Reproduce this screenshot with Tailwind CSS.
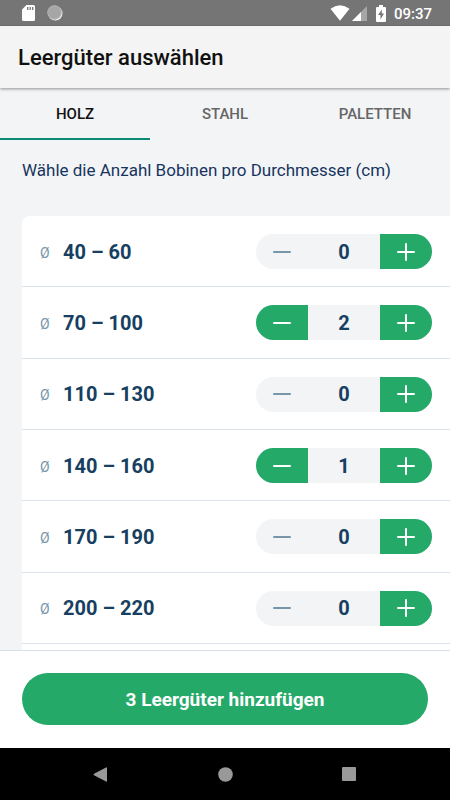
<!DOCTYPE html>
<html lang="de">
<head>
<meta charset="utf-8">
<meta name="viewport" content="width=device-width, initial-scale=1">
<title>Leergüter auswählen</title>
<script src="https://cdn.jsdelivr.net/npm/@tailwindcss/browser@4"></script>
</head>
<body class="flex h-screen flex-col overflow-hidden bg-[#f3f4f6] font-[Roboto,sans-serif]">
  <div class="flex h-[26px] shrink-0 items-center bg-[#757575] pr-[18px] pl-[22px] text-white">
    <svg class="h-4 w-[13px]" viewBox="0 0 13 16" aria-hidden="true"><path fill="#fff" d="M4.500 0H11.500Q13 0 13 1.500V14.500Q13 16 11.500 16H1.500Q0 16 0 14.500V4.500Z"/><path stroke="#757575" stroke-width="1.300" d="M5.700 2v3M8.200 2v3M10.700 2v3"/></svg>
    <svg class="ml-3 size-4" viewBox="0 0 16 16" aria-hidden="true"><circle cx="8.300" cy="8.300" r="7.200" fill="#f3f3f3"/><circle cx="7.500" cy="7.500" r="7.200" fill="#a6a6a6"/><circle cx="7.300" cy="7.300" r="6.500" fill="none" stroke="#bdbdbd" stroke-dasharray="1 1"/></svg>
    <svg class="ml-auto h-4 w-5" viewBox="0 0 20 16" aria-hidden="true"><path fill="#fff" d="M0.500 3.800Q10-3.200 19.500 3.800L10 15.700Z"/></svg>
    <svg class="ml-[2px] h-4 w-[15px]" viewBox="0 0 15 16" aria-hidden="true"><path fill="#a6a6a6" d="M15 1V16H0Z"/><path fill="#fff" d="M9 7V16H0Z"/></svg>
    <svg class="ml-[9px] h-[17px] w-[10px]" viewBox="0 0 10 17" aria-hidden="true"><path fill="#fff" d="M3 0H7V2H9Q10 2 10 3V16Q10 17 9 17H1Q0 17 0 16V3Q0 2 1 2H3Z"/><path fill="#757575" d="M5.800 4.500L2 10H4.500V14.500L8 8.500H5.800Z"/></svg>
    <span class="ml-2 pt-[2px] text-[15px] font-medium">09:37</span>
  </div>
  <header class="relative flex h-[62px] shrink-0 items-center bg-[#f4f4f4] px-[18px] shadow-[0_1px_3px_rgba(0,0,0,0.4)]">
    <h1 class="text-[22px] font-medium text-[#111]">Leergüter auswählen</h1>
  </header>
  <div role="tablist" class="grid h-[52px] shrink-0 grid-cols-3 text-[15px] font-medium text-[#666]">
    <button role="tab" aria-selected="true" class="border-b-2 border-[#088a76] pt-[2px] text-[#111]">HOLZ</button>
    <button role="tab" aria-selected="false" class="border-b-2 border-transparent pt-[2px]">STAHL</button>
    <button role="tab" aria-selected="false" class="border-b-2 border-transparent pt-[2px]">PALETTEN</button>
  </div>
  <main class="flex min-h-0 flex-1 flex-col overflow-hidden pl-[22px]">
    <p class="pt-[18px] pb-[34px] text-[17px] leading-6 text-[#17345f]">Wähle die Anzahl Bobinen pro Durchmesser (cm)</p>
    <ul id="sizes" class="flex flex-1 flex-col rounded-tl-lg bg-white pb-[6px] text-xl font-bold text-[#173f61]"></ul>
  </main>
  <footer class="shrink-0 border-t border-[#d8dfe8] bg-white px-[22px] pt-[22px] pb-[23px]">
    <button class="h-[52px] w-full rounded-full bg-[#24a969] pt-[2px] text-[19px] font-bold text-white">3 Leergüter hinzufügen</button>
  </footer>
  <nav class="grid h-[52px] shrink-0 grid-cols-[1fr_24px_1fr] items-center bg-black" aria-label="System">
    <button aria-label="Zurück" class="ml-[93px] justify-self-start"><svg class="h-[15px] w-[14px]" viewBox="0 0 14 15"><path fill="#999" d="M13 0.500Q14 0 14 1V14Q14 15 13 14.500L1 8.200Q0 7.500 1 6.800Z"/></svg></button>
    <button aria-label="Startseite" class="justify-self-center"><svg class="size-[15px]" viewBox="0 0 15 15"><circle cx="7.500" cy="7.500" r="7.300" fill="#999"/></svg></button>
    <button aria-label="Übersicht" class="mr-[94px] justify-self-end"><svg class="size-[14px]" viewBox="0 0 14 14"><rect width="14" height="14" rx="1" fill="#999"/></svg></button>
  </nav>
  <script>
    const sizes = [['40 – 60', 0], ['70 – 100', 2], ['110 – 130', 0], ['140 – 160', 1], ['170 – 190', 0], ['200 – 220', 0]];
    const off = 'text-[#7896aa]';
    const on = 'bg-[#24a969] text-white';
    document.getElementById('sizes').innerHTML = sizes.map(([label, count]) => `
      <li class="flex min-h-16 flex-1 items-center border-b border-[#dce3ea] pt-px pr-[18px] pl-[18px]">
        <span class="w-[23px] pt-[2px] text-sm font-normal text-[#7896aa]">Ø</span>
        <span>${label}</span>
        <div class="ml-auto grid h-[35px] grid-cols-[52px_72px_52px] overflow-hidden rounded-full bg-[#f3f4f6]">
          <button aria-label="${label} verringern" class="grid place-items-center ${count ? on : off}"><svg class="size-[18px]" viewBox="0 0 18 18" stroke="currentColor" stroke-width="2" stroke-linecap="round"><path d="M1 9H17"/></svg></button>
          <output class="grid place-items-center">${count}</output>
          <button aria-label="${label} erhöhen" class="grid place-items-center bg-[#24a969] text-white"><svg class="size-[18px]" viewBox="0 0 18 18" stroke="currentColor" stroke-width="2" stroke-linecap="round"><path d="M1 9H17M9 1V17"/></svg></button>
        </div>
      </li>`).join('');
  </script>
</body>
</html>
